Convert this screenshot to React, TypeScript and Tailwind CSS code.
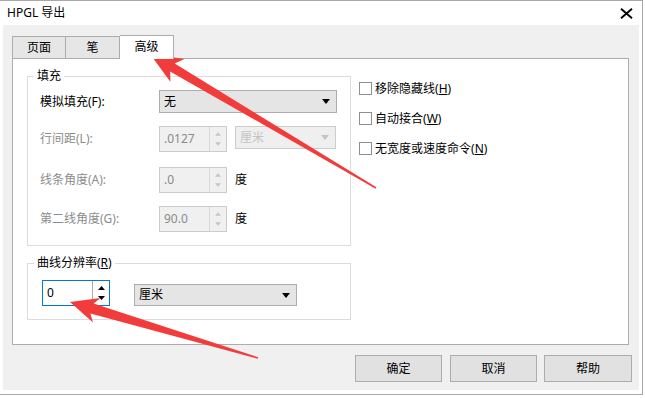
import React from 'react';

function Caret({ color = '#000' }: { color?: string }) {
  return (
    <svg width="8" height="5" viewBox="0 0 8 5">
      <polygon points="0,0 8,0 4,5" fill={color} />
    </svg>
  );
}

function SpinBox({ value, disabled, focused }: { value: string; disabled?: boolean; focused?: boolean }) {
  const arrow = disabled ? '#c4c4c4' : '#000';
  return (
    <div
      className={`flex h-[26px] w-[68px] border ${focused ? 'border-[#0078d7] bg-white text-black' : 'border-[#cccccc] bg-[#f0f0f0] text-[#8a8a8a]'}`}
    >
      <div className="flex flex-1 items-center pl-[4px]">{value}</div>
      <div
        className={`flex w-[17px] flex-col items-center justify-center gap-[6px] border-l ${focused ? 'border-[#adadad]' : 'border-[#d9d9d9]'}`}
      >
        <svg width={disabled ? 6 : 7} height="4" viewBox="0 0 7 4">
          <polygon points="0,4 7,4 3.5,0" fill={arrow} />
        </svg>
        <svg width={disabled ? 6 : 7} height="4" viewBox="0 0 7 4">
          <polygon points="0,0 7,0 3.5,4" fill={arrow} />
        </svg>
      </div>
    </div>
  );
}

function Select({ text, width, height, disabled }: { text: string; width: string; height: string; disabled?: boolean }) {
  return (
    <div
      className={`flex items-center justify-between border pl-[4px] pr-[6px] ${width} ${height} ${disabled ? 'border-[#cccccc] bg-[#efefef] text-[#c4c4c4]' : 'border-[#adadad] bg-[#e5e5e5] text-black'}`}
    >
      <span>{text}</span>
      <Caret color={disabled ? '#c4c4c4' : '#000'} />
    </div>
  );
}

function Check({ label, hot }: { label: string; hot: string }) {
  return (
    <div className="flex h-[13px] items-center">
      <div className="h-[13px] w-[13px] border border-[#8f8f8f] bg-white" />
      <span className="ml-[3px] whitespace-nowrap leading-[16px]">
        {label}(<span className="underline">{hot}</span>)
      </span>
    </div>
  );
}

function Row({ label, children, className }: { label: string; children: React.ReactNode; className: string }) {
  return (
    <div className={`flex items-center ${className}`}>
      <div className="w-[119px] whitespace-nowrap">{label}</div>
      {children}
    </div>
  );
}

export default function App() {
  return (
    <div className="relative h-[398px] w-[645px] bg-white font-['Noto_Sans','Noto_Sans_CJK_SC',sans-serif] text-[12px] text-black">
      <div className="flex h-[395px] w-[643px] flex-col border-t border-r border-b border-[#a8a8a8]">
        {/* title bar */}
        <div className="flex h-[24px] items-center justify-between pl-[7px] pr-[9px]">
          <span className="leading-[16px]">HPGL 导出</span>
          <svg width="13" height="11" viewBox="0 0 13 11">
            <path d="M1 0.8 L12 10.2 M12 0.8 L1 10.2" stroke="#000" strokeWidth="1.9" />
          </svg>
        </div>

        {/* body */}
        <div className="mx-[3px] mb-[4px] flex flex-1 flex-col bg-[#f0f0f0] pl-[9px] pr-[7px] pt-[10px]">
          {/* tabs */}
          <div className="flex h-[23px] items-end">
            <div className="flex h-[22px] w-[54px] items-center justify-center border-x border-t border-[#adadad] bg-[#e6e6e6]">
              页面
            </div>
            <div className="flex h-[22px] w-[54px] items-center justify-center border-r border-t border-[#adadad] bg-[#e6e6e6]">
              笔
            </div>
            <div className="relative z-10 -mb-[1px] flex h-[24px] w-[54px] items-center justify-center border-r border-t border-[#adadad] bg-white pb-[1px]">
              高级
            </div>
          </div>

          {/* panel */}
          <div className="mr-[3px] flex h-[287px] border border-[#adadad] bg-white">
            <div className="ml-[14px] flex w-[324px] flex-col pt-[9px]">
              <fieldset className="border border-[#dcdcdc]">
                <legend className="ml-[6px] px-[3px] leading-[16px]">填充</legend>
                <div className="pb-[13px] pl-[12px]">
                  <Row label="模拟填充(F):" className="mt-[6px] h-[23px]">
                    <Select text="无" width="w-[178px]" height="h-[23px]" />
                  </Row>
                  <Row label="行间距(L):" className="mt-[13px] h-[26px] text-[#8c8c8c]">
                    <SpinBox value=".0127" disabled />
                    <div className="ml-[8px] self-start">
                      <Select text="厘米" width="w-[101px]" height="h-[23px]" disabled />
                    </div>
                  </Row>
                  <Row label="线条角度(A):" className="mt-[15px] h-[26px] text-[#8c8c8c]">
                    <SpinBox value=".0" disabled />
                    <span className="ml-[8px] text-black">度</span>
                  </Row>
                  <Row label="第二线角度(G):" className="mt-[13px] h-[26px] text-[#8c8c8c]">
                    <SpinBox value="90.0" disabled />
                    <span className="ml-[8px] text-black">度</span>
                  </Row>
                </div>
              </fieldset>

              <fieldset className="mt-[9px] border border-[#dcdcdc]">
                <legend className="ml-[6px] px-[3px] leading-[16px]">
                  曲线分辨率(<span className="underline">R</span>)
                </legend>
                <div className="mt-[9px] flex h-[26px] items-end pl-[14px]">
                  <SpinBox value="0" focused />
                  <div className="ml-[24px]">
                    <Select text="厘米" width="w-[163px]" height="h-[22px]" />
                  </div>
                </div>
                <div className="h-[13px]" />
              </fieldset>
            </div>

            <div className="ml-[8px] flex flex-col gap-[17px] pt-[23px]">
              <Check label="移除隐藏线" hot="H" />
              <Check label="自动接合" hot="W" />
              <Check label="无宽度或速度命令" hot="N" />
            </div>
          </div>

          {/* buttons */}
          <div className="mt-[10px] flex justify-end">
            <button className="h-[27px] w-[87px] border border-[#adadad] bg-[#e1e1e1]">确定</button>
            <button className="ml-[8px] h-[27px] w-[87px] border border-[#adadad] bg-[#e1e1e1]">取消</button>
            <button className="ml-[7px] h-[27px] w-[88px] border border-[#adadad] bg-[#e1e1e1]">帮助</button>
          </div>
        </div>
      </div>

      {/* red annotation arrows */}
      <svg className="pointer-events-none absolute left-0 top-0" width="645" height="398">
        <polygon
          points="150,54 184.5,59 174.7,63.6 376.4,187.3 375.6,188.7 170.1,71.4 170.5,82"
          fill="#f23c3c"
        />
        <polygon
          points="70,302 100.5,298 93.6,303.6 258.2,357.3 257.8,358.7 90.4,313.6 93,322.5"
          fill="#f23c3c"
        />
      </svg>
    </div>
  );
}
